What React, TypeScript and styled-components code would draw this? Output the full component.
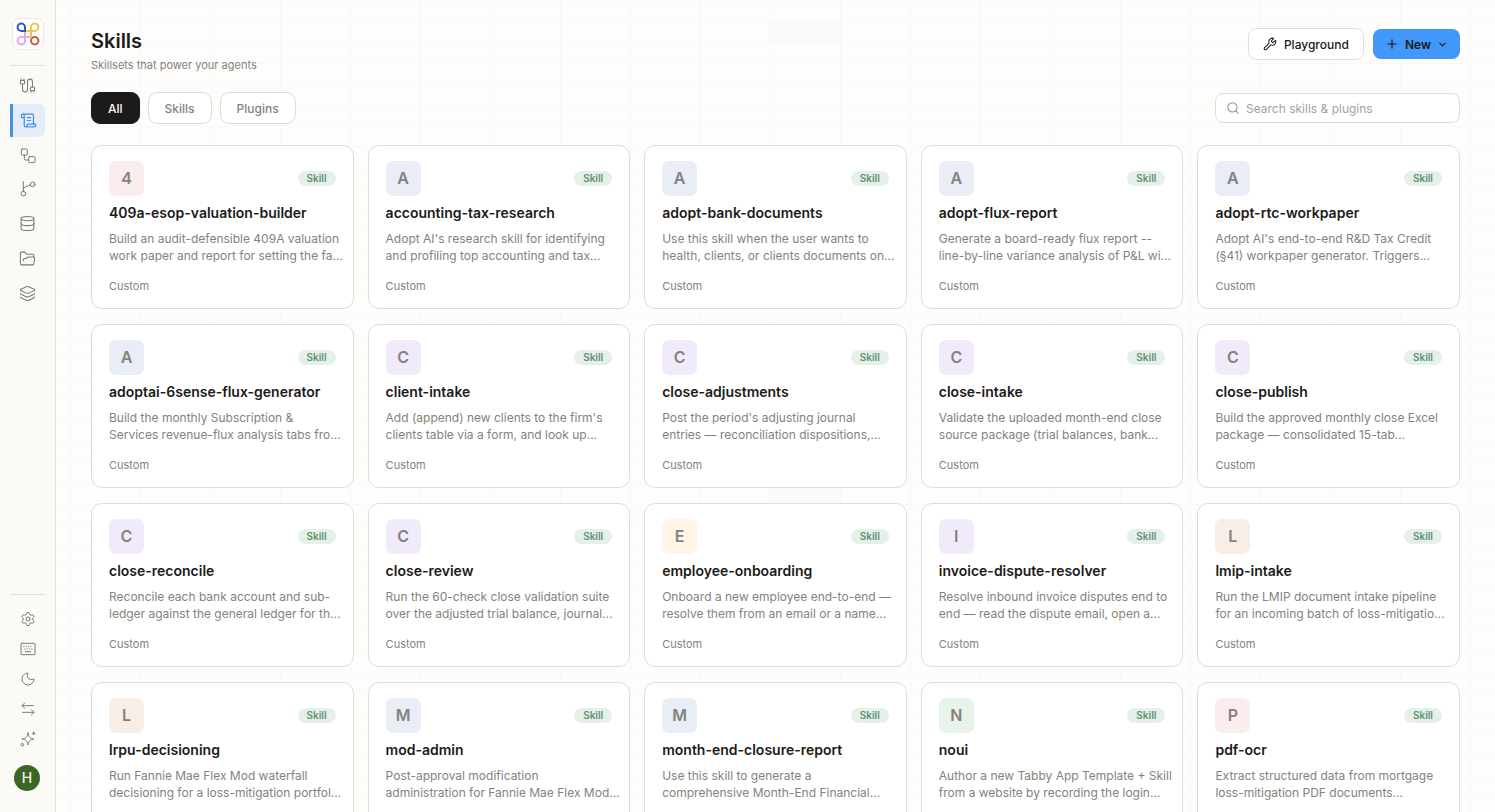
import React, { useState } from "react";
import styled, { createGlobalStyle } from "styled-components";
import {
  Cable,
  ScrollText,
  Database,
  Layers,
  Moon,
  Settings,
  Wrench,
  Plus,
  ChevronDown,
  Search,
} from "lucide-react";

const GlobalStyle = createGlobalStyle`
  *, *::before, *::after { box-sizing: border-box; }
  body {
    margin: 0;
    background: #fefdfb;
    color: #1c1b19;
    font-family: Inter, "Liberation Sans", sans-serif;
    font-size: 12px;
  }
  button, input { font-family: inherit; }
  h1, h2, p { margin: 0; }
`;

const Shell = styled.div`
  display: flex;
  height: 100vh;
  overflow: hidden;
`;

const Sidebar = styled.aside`
  display: flex;
  flex-direction: column;
  flex: none;
  width: 56px;
  padding: 18px 10px 21px;
  background: #fbfaf6;
  border-right: 1px solid #e3e2dc;
`;

const Logo = styled.a`
  display: flex;
  align-items: center;
  justify-content: center;
  width: 32px;
  height: 32px;
  margin: 0 0 15px 2px;
  border: 1px solid #e9e8ec;
  border-radius: 7px;
  background: #fefefe;
`;

const Divider = styled.hr`
  width: 100%;
  height: 1px;
  margin: 0;
  border: 0;
  background: #dfded9;
`;

const NavGroup = styled.nav`
  display: flex;
  flex-direction: column;
  gap: 2px;
`;

const MainNav = styled.div`
  flex: 1;
  margin-top: 3px;
`;

const NavItem = styled.a<{ $active?: boolean }>`
  display: flex;
  align-items: center;
  justify-content: center;
  height: 33px;
  padding-right: ${(p) => (p.$active ? "2px" : "0")};
  color: ${(p) => (p.$active ? "#4a90e2" : "#7b7a75")};
  background: ${(p) => (p.$active ? "#e4edf7" : "transparent")};
  border-left: ${(p) => (p.$active ? "3px solid #4a90e2" : "0")};
  border-radius: 1px 6px 6px 1px;
`;

const ToolList = styled.div`
  display: flex;
  flex-direction: column;
  padding-top: 9px;
`;

const ToolButton = styled.button`
  display: flex;
  align-items: center;
  justify-content: center;
  height: 30px;
  padding: 0;
  border: 0;
  background: none;
  color: #7b7a75;
`;

const Avatar = styled.button`
  width: 26px;
  height: 26px;
  margin: 11px 0 0 4px;
  padding: 0;
  border: 0;
  border-radius: 50%;
  background: #3c6626;
  color: #f3f6f1;
  font-size: 14px;
  font-weight: 500;
  line-height: 26px;
`;

const Main = styled.main`
  flex: 1;
  min-width: 0;
  overflow: hidden;
  padding: 28px 35px 0;
  background-color: #fefdfb;
  background-image: linear-gradient(#f9f9fb, #f9f9fb),
    linear-gradient(#fafafb, #fafafb),
    linear-gradient(#fbfbfb, #fbfbfb),
    linear-gradient(#fbfbfb, #fbfbfb),
    linear-gradient(#f9f8f6 1px, transparent 1px),
    linear-gradient(90deg, #f9f8f6 1px, transparent 1px);
  background-size: 70px 21px;
  background-position: 713px 21px, 713px 483px, 574px 504px, 1414px 504px, 14px 0, 14px 0;
  background-repeat: no-repeat, no-repeat, no-repeat, no-repeat, repeat, repeat;
`;

const Header = styled.header`
  display: flex;
  justify-content: space-between;
  align-items: flex-start;
`;

const Title = styled.h1`
  font-size: 20px;
  font-weight: 600;
  line-height: 26px;
`;

const Subtitle = styled.p`
  margin-top: 3px;
  font-size: 11px;
  line-height: 16px;
  color: #84827c;
`;

const Actions = styled.div`
  display: flex;
  align-items: center;
  gap: 9px;
`;

const ActionButton = styled.button<{ $primary?: boolean }>`
  display: flex;
  align-items: center;
  gap: ${(p) => (p.$primary ? "6px" : "7px")};
  height: ${(p) => (p.$primary ? "30px" : "32px")};
  padding: ${(p) => (p.$primary ? "0 12px" : "0 14px")};
  border: ${(p) => (p.$primary ? "0" : "1px solid #e2e1d9")};
  border-radius: 8px;
  background: ${(p) => (p.$primary ? "#4297fb" : "#ffffff")};
  color: #1a1a18;
  font-size: 12px;
  font-weight: ${(p) => (p.$primary ? 600 : 500)};
`;

const Toolbar = styled.div`
  display: flex;
  justify-content: space-between;
  align-items: center;
  margin-top: 19px;
`;

const Tabs = styled.div`
  display: flex;
  gap: 8px;
`;

const Tab = styled.button<{ $active: boolean }>`
  height: 32px;
  padding: 0 16px;
  border: 1px solid ${(p) => (p.$active ? "#1c1b19" : "#dfded4")};
  border-radius: 9px;
  background: ${(p) => (p.$active ? "#1c1b19" : "#ffffff")};
  color: ${(p) => (p.$active ? "#ffffff" : "#84827c")};
  font-size: 12px;
  font-weight: 500;
`;

const SearchBox = styled.label`
  display: flex;
  align-items: center;
  gap: 6px;
  width: 245px;
  height: 30px;
  padding: 0 10px;
  border: 1px solid #dfded4;
  border-radius: 8px;
  background: #ffffff;
  color: #8f8d87;
`;

const SearchInput = styled.input`
  flex: 1;
  min-width: 0;
  padding: 0;
  border: 0;
  outline: 0;
  background: none;
  font-size: 12px;
  color: #1c1b19;
  &::placeholder { color: #a3a19b; }
`;

const CardGrid = styled.section`
  display: grid;
  grid-template-columns: repeat(5, minmax(0, 1fr));
  gap: 15px 14px;
  margin-top: 21px;
`;

const Card = styled.article`
  padding: 15px 17px 14px;
  border: 1px solid #dfded4;
  border-radius: 11px;
  background: #ffffff;
`;

const CardTop = styled.div`
  display: flex;
  align-items: center;
  justify-content: space-between;
`;

const Initial = styled.div<{ $tint: string }>`
  width: 35px;
  height: 35px;
  border-radius: 7px;
  background: ${(p) => p.$tint};
  color: #84827c;
  font-size: 16px;
  font-weight: 600;
  line-height: 35px;
  text-align: center;
`;

const Badge = styled.span`
  padding: 0 9px;
  border-radius: 8px;
  background: #e5f0e9;
  color: #5f9272;
  font-size: 10px;
  font-weight: 600;
  line-height: 15px;
`;

const CardTitle = styled.h2`
  margin-top: 8px;
  font-size: 14px;
  font-weight: 600;
  line-height: 18px;
  white-space: nowrap;
`;

const Description = styled.p`
  margin: 8px -10px 0 0;
  font-size: 12px;
  line-height: 17px;
  color: #84827c;
  white-space: pre;
`;

const Source = styled.p`
  margin-top: 14px;
  font-size: 11px;
  line-height: 16px;
  color: #84827c;
`;

const stroke = {
  fill: "none",
  stroke: "currentColor",
  strokeWidth: 1.5,
  strokeLinecap: "round" as const,
  strokeLinejoin: "round" as const,
};

const LogoMark = () => (
  <svg width="24" height="24" viewBox="0 0 24 24" fill="none" strokeWidth="2">
    <path d="M15 15H5.300a3.700 3.700 0 1 0 3.700 3.700V9" stroke="#e5a8e6" />
    <path d="M9 9h9.700a3.700 3.700 0 1 0-3.700-3.700V15" stroke="#e6c84f" />
    <path d="M9 9H5.300A3.700 3.700 0 1 1 9 5.300Z" stroke="#3159c4" />
    <circle cx="18.700" cy="18.700" r="3.700" stroke="#d4573a" />
  </svg>
);

const FlowIcon = () => (
  <svg width="16" height="16" viewBox="0 0 24 24" {...stroke}>
    <rect x="2" y="1.500" width="9" height="9" rx="1.500" />
    <rect x="13" y="13" width="9.500" height="9" rx="1.500" />
    <path d="M6.500 10.500V16a2 2 0 0 0 2 2H13" />
  </svg>
);

const BranchIcon = () => (
  <svg width="16" height="16" viewBox="0 0 24 24" {...stroke}>
    <path d="M5 1v14.500" />
    <circle cx="5" cy="19" r="3.500" />
    <circle cx="19" cy="5" r="3.500" />
    <path d="M15.500 5.500 11 7.500C8 8.500 5.500 9.500 5 13" />
  </svg>
);

const FolderIcon = () => (
  <svg width="17" height="17" viewBox="0 0 24 24" {...stroke}>
    <path d="M4 21a2 2 0 0 1-2-2V4a1 1 0 0 1 1-1h5l3 3h8a2 2 0 0 1 2 2v2" />
    <path d="M4 21h15a2 2 0 0 0 2-2l1-7a2 2 0 0 0-2-2h-7.500l-2 2H8a2 2 0 0 0-2 2v1" />
  </svg>
);

const KeyboardIcon = () => (
  <svg width="16" height="16" viewBox="0 0 24 24" {...stroke}>
    <rect x="1.500" y="3.500" width="21" height="17" rx="1" />
    <path d="M5.500 8h.5M9 8h.5M12.500 8h.5M16 8h.5M7 12h.5M10.500 12h.5M14 12h.5M17.500 12h.5M8 16h8" />
  </svg>
);

const SwapIcon = () => (
  <svg width="16" height="16" viewBox="0 0 24 24" {...stroke}>
    <path d="M20 7H3M7 3 3 7l4 4M4 17h17M17 13l4 4-4 4" />
  </svg>
);

const SparkleIcon = () => (
  <svg width="16" height="16" viewBox="0 0 24 24" {...stroke}>
    <path d="M12 3c1 6 3 8 9 9-6 1-8 3-9 9-1-6-3-8-9-9 6-1 8-3 9-9z" />
    <path d="M20.500 1.500v4M18.500 3.500h4" />
    <circle cx="3.500" cy="20.500" r="2" />
  </svg>
);

const RED = "#fbeded";
const BLUE = "#e8edf6";
const PURPLE = "#f1eafa";
const YELLOW = "#fff4e6";
const ORANGE = "#f9eee6";
const GREEN = "#e8f3ea";

type Skill = { name: string; tint: string; text: string };

const skills: Skill[] = [
  { name: "409a-esop-valuation-builder", tint: RED, text: "Build an audit-defensible 409A valuation\nwork paper and report for setting the fa..." },
  { name: "accounting-tax-research", tint: BLUE, text: "Adopt AI's research skill for identifying\nand profiling top accounting and tax..." },
  { name: "adopt-bank-documents", tint: BLUE, text: "Use this skill when the user wants to\nhealth, clients, or clients documents on..." },
  { name: "adopt-flux-report", tint: BLUE, text: "Generate a board-ready flux report --\nline-by-line variance analysis of P&L wi..." },
  { name: "adopt-rtc-workpaper", tint: BLUE, text: "Adopt AI's end-to-end R&D Tax Credit\n(§41) workpaper generator. Triggers..." },
  { name: "adoptai-6sense-flux-generator", tint: BLUE, text: "Build the monthly Subscription &\nServices revenue-flux analysis tabs fro..." },
  { name: "client-intake", tint: PURPLE, text: "Add (append) new clients to the firm's\nclients table via a form, and look up..." },
  { name: "close-adjustments", tint: PURPLE, text: "Post the period's adjusting journal\nentries — reconciliation dispositions,..." },
  { name: "close-intake", tint: PURPLE, text: "Validate the uploaded month-end close\nsource package (trial balances, bank..." },
  { name: "close-publish", tint: PURPLE, text: "Build the approved monthly close Excel\npackage — consolidated 15-tab..." },
  { name: "close-reconcile", tint: PURPLE, text: "Reconcile each bank account and sub-\nledger against the general ledger for th..." },
  { name: "close-review", tint: PURPLE, text: "Run the 60-check close validation suite\nover the adjusted trial balance, journal..." },
  { name: "employee-onboarding", tint: YELLOW, text: "Onboard a new employee end-to-end —\nresolve them from an email or a name..." },
  { name: "invoice-dispute-resolver", tint: PURPLE, text: "Resolve inbound invoice disputes end to\nend — read the dispute email, open a..." },
  { name: "lmip-intake", tint: ORANGE, text: "Run the LMIP document intake pipeline\nfor an incoming batch of loss-mitigatio..." },
  { name: "lrpu-decisioning", tint: ORANGE, text: "Run Fannie Mae Flex Mod waterfall\ndecisioning for a loss-mitigation portfol..." },
  { name: "mod-admin", tint: BLUE, text: "Post-approval modification\nadministration for Fannie Mae Flex Mod..." },
  { name: "month-end-closure-report", tint: BLUE, text: "Use this skill to generate a\ncomprehensive Month-End Financial..." },
  { name: "noui", tint: GREEN, text: "Author a new Tabby App Template + Skill\nfrom a website by recording the login..." },
  { name: "pdf-ocr", tint: RED, text: "Extract structured data from mortgage\nloss-mitigation PDF documents..." },
];

const tabs = ["All", "Skills", "Plugins"];

export default function App() {
  const [tab, setTab] = useState("All");
  return (
    <>
      <GlobalStyle />
      <Shell>
        <Sidebar>
          <Logo href="#" aria-label="Home"><LogoMark /></Logo>
          <Divider />
          <MainNav>
            <NavGroup aria-label="Build">
              <NavItem href="#" aria-label="Connections"><Cable size={17} strokeWidth={1.5} /></NavItem>
              <NavItem href="#" aria-label="Skills" $active><ScrollText size={17} strokeWidth={1.75} /></NavItem>
              <NavItem href="#" aria-label="Workflows"><FlowIcon /></NavItem>
            </NavGroup>
            <NavGroup aria-label="Data">
              <NavItem href="#" aria-label="Branches"><BranchIcon /></NavItem>
              <NavItem href="#" aria-label="Database"><Database size={17} strokeWidth={1.5} /></NavItem>
              <NavItem href="#" aria-label="Files"><FolderIcon /></NavItem>
              <NavItem href="#" aria-label="Stacks"><Layers size={17} strokeWidth={1.5} /></NavItem>
            </NavGroup>
          </MainNav>
          <Divider />
          <ToolList>
            <ToolButton aria-label="Settings"><Settings size={16} strokeWidth={1.5} /></ToolButton>
            <ToolButton aria-label="Shortcuts"><KeyboardIcon /></ToolButton>
            <ToolButton aria-label="Dark mode"><Moon size={16} strokeWidth={1.5} /></ToolButton>
            <ToolButton aria-label="Switch"><SwapIcon /></ToolButton>
            <ToolButton aria-label="Assistant"><SparkleIcon /></ToolButton>
          </ToolList>
          <Avatar aria-label="Account">H</Avatar>
        </Sidebar>
        <Main>
          <Header>
            <div>
              <Title>Skills</Title>
              <Subtitle>Skillsets that power your agents</Subtitle>
            </div>
            <Actions>
              <ActionButton><Wrench size={14} strokeWidth={1.75} />Playground</ActionButton>
              <ActionButton $primary><Plus size={14} />New<ChevronDown size={11} strokeWidth={2.5} /></ActionButton>
            </Actions>
          </Header>
          <Toolbar>
            <Tabs>
              {tabs.map((t) => (
                <Tab key={t} $active={t === tab} onClick={() => setTab(t)}>{t}</Tab>
              ))}
            </Tabs>
            <SearchBox>
              <Search size={14} strokeWidth={1.75} />
              <SearchInput type="text" aria-label="Search skills & plugins" placeholder="Search skills & plugins" />
            </SearchBox>
          </Toolbar>
          <CardGrid>
            {skills.map((s) => (
              <Card key={s.name}>
                <CardTop>
                  <Initial $tint={s.tint}>{s.name[0].toUpperCase()}</Initial>
                  <Badge>Skill</Badge>
                </CardTop>
                <CardTitle>{s.name}</CardTitle>
                <Description>{s.text}</Description>
                <Source>Custom</Source>
              </Card>
            ))}
          </CardGrid>
        </Main>
      </Shell>
    </>
  );
}
